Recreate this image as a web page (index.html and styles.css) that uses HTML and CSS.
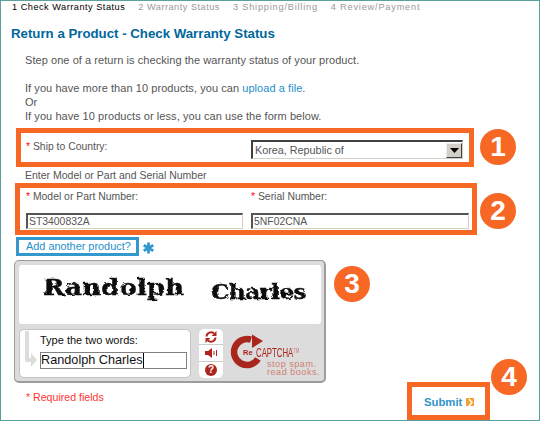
FILE: index.html
```html
<!DOCTYPE html>
<html lang="en">
<head>
<meta charset="utf-8">
<title>Return a Product</title>
<link rel="stylesheet" href="styles.css">
</head>
<body>
<div class="page">
  <nav class="steps">
    <span class="step current">1 Check Warranty Status</span>
    <span class="step">2 Warranty Status</span>
    <span class="step step-wide">3 Shipping/Billing</span>
    <span class="step step-wide">4 Review/Payment</span>
  </nav>
  <h1 class="title">Return a Product - Check Warranty Status</h1>
  <div class="intro">
    <p class="intro-first">Step one of a return is checking the warranty status of your product.</p>
    <p>If you have more than 10 products, you can <a class="link" href="#">upload a file</a>.<br>Or<br>If you have 10 products or less, you can use the form below.</p>
  </div>
  <div class="callout country-box">
    <span class="label"><span class="req">*</span> Ship to Country:</span>
    <div class="select"><span class="select-value">Korea, Republic of</span><span class="select-btn"><svg width="9" height="5" viewBox="0 0 9 5"><path d="M0 0h9L4.500 5z" fill="#000"/></svg></span></div>
  </div>
  <div class="enter-note">Enter Model or Part and Serial Number</div>
  <div class="callout numbers-box">
    <div class="field model-field">
      <span class="label"><span class="req">*</span> Model or Part Number:</span>
      <div class="input">ST3400832A</div>
    </div>
    <div class="field serial-field">
      <span class="label"><span class="req">*</span> Serial Number:</span>
      <div class="input">5NF02CNA</div>
    </div>
  </div>
  <div class="add-row">
    <a class="add-link" href="#">Add another product?</a>
    <svg class="add-star" width="11" height="12" viewBox="0 0 12 12"><g stroke="#3399cc" stroke-width="3"><path d="M6 0v12M.8 3l10.400 6M.8 9l10.400-6"/></g></svg>
  </div>
  <div class="captcha">
    <svg class="filter-defs" width="0" height="0"><filter id="warp" x="-5%" y="-15%" width="110%" height="130%"><feTurbulence type="fractalNoise" baseFrequency="0.22" numOctaves="2" seed="4"/><feDisplacementMap in="SourceGraphic" scale="3"/><feGaussianBlur stdDeviation="0.35"/></filter></svg>
    <div class="captcha-image"><span class="word-one">Randolph</span><span class="word-two">Charles</span></div>
    <div class="captcha-bottom">
      <div class="type-box">
        <svg class="type-arrow" width="14" height="38" viewBox="0 0 14 38"><path d="M2 0h4v27h2v-5l6 7-6 7v-5H4q-2 0-2-2z" fill="#dcdcdc"/></svg>
        <div class="type-body">
          <div class="type-label">Type the two words:</div>
          <div class="type-input">Randolph Charles<span class="caret"></span></div>
        </div>
      </div>
      <div class="tools">
        <div class="tool"><svg width="12" height="12" viewBox="0 0 12 12"><path d="M1.500 5.500A4.500 4.500 0 0 1 9 2.500M10.500 6.500A4.500 4.500 0 0 1 3 9.500" fill="none" stroke="#b3261e" stroke-width="2"/><path d="M11.500 0v5h-5zM.5 12V7h5z" fill="#b3261e"/></svg></div>
        <div class="tool"><svg width="13" height="10" viewBox="0 0 13 10"><path d="M0 3h3l4-3v10L3 7H0z" fill="#b3261e"/><path d="M9 3v4M11.500 2v6" stroke="#b3261e" stroke-width="1"/></svg></div>
        <div class="tool"><span class="help">?</span></div>
      </div>
      <div class="logo">
        <svg class="logo-ring" width="36" height="40" viewBox="0 0 36 40"><path d="M21 6.600A13 13 0 1 0 28 26" fill="none" stroke="#a9261c" stroke-width="6.500"/><path d="M22 1.500L33 8 22 15z" fill="#a9261c"/></svg>
        <div class="logo-text">
          <div class="logo-name"><span class="logo-re">Re</span><span class="logo-captcha">CAPTCHA<sup class="tm">TM</sup></span></div>
          <div class="logo-tag">stop spam.<br>read books.</div>
        </div>
      </div>
    </div>
  </div>
  <div class="required">* Required fields</div>
  <div class="callout submit-box">
    <a class="submit" href="#">Submit</a><span class="submit-icon"><svg width="5" height="7" viewBox="0 0 5 7"><path d="M1 0l3 3.500L1 7" fill="none" stroke="#fff" stroke-width="1.500"/></svg></span>
  </div>
  <span class="badge badge-1">1</span>
  <span class="badge badge-2">2</span>
  <span class="badge badge-3">3</span>
  <span class="badge badge-4">4</span>
</div>
</body>
</html>
```
FILE: styles.css
```css
* { box-sizing: border-box; }
html, body { margin: 0; padding: 0; background: #fff; }
body { font-family: "Liberation Sans", Arial, sans-serif; font-size: 11px; color: #555; }
.page {
  position: relative;
  width: 540px;
  height: 421px;
  border: 1px solid #5b9f9f;
  overflow: hidden;
  padding-top: 1px;
}
.steps { display: flex; gap: 13px; padding-left: 11px; height: 13px; font-size: 9.200px; line-height: 11px; letter-spacing: .5px; color: #999; white-space: nowrap; }
.step.current { color: #000; }
.step.step-wide { letter-spacing: .8px; }
.title { margin: 11px 0 0 10px; font-size: 13.250px; line-height: 16px; font-weight: bold; color: #00679c; }
.intro { margin: 11px 0 0 24px; line-height: 14px; font-size: 11px; letter-spacing: .06px; }
.intro p { margin: 0; }
.intro .intro-first { margin-bottom: 14px; }
.link { color: #1e90cc; text-decoration: none; }
.callout { border: 5px solid #f66824; }
.label { font-size: 10.400px; line-height: 14px; }
.req { color: #f00; }
.country-box {
  margin: 5px 0 0 15px;
  width: 458px;
  height: 39px;
  padding: 7px 0 0 5px;
  display: flex;
  justify-content: space-between;
  align-items: flex-start;
}
.select {
  width: 212px;
  height: 19px;
  margin: 0 6px 0 0;
  border: 1px solid #d4d0c8;
  border-top: 2px solid #404040;
  border-left: 2px solid #404040;
  display: flex;
  align-items: center;
  justify-content: space-between;
  padding-left: 2px;
}
.select-value { line-height: 14px; font-size: 10.800px; }
.select-btn {
  width: 16px;
  height: 15px;
  background: #d4d0c8;
  border: 1px solid #404040;
  border-top-color: #eee;
  border-left-color: #eee;
  display: flex;
  align-items: center;
  justify-content: center;
}
.enter-note { margin: 1px 0 0 24px; line-height: 14px; height: 14px; font-size: 10.500px; }
.numbers-box {
  margin: 1px 0 0 14px;
  width: 462px;
  height: 52px;
  padding: 2px 0 0 6px;
  display: flex;
  gap: 8px;
}
.field { display: flex; flex-direction: column; gap: 9px; }
.model-field { width: 217px; }
.serial-field { width: 218px; }
.input {
  height: 16px;
  border: 1px solid #d4d0c8;
  border-top: 2px solid #555;
  border-left: 2px solid #555;
  font-size: 10.400px;
  line-height: 13px;
  padding-left: 1px;
}
.add-row { display: flex; align-items: center; margin: 2px 0 0 15px; gap: 4px; }
.add-link {
  width: 123px;
  height: 19px;
  border: 3px solid #3399cc;
  color: #1e90cc;
  text-decoration: none;
  line-height: 13px;
  font-size: 10.900px;
  padding-left: 7px;
  white-space: nowrap;
}
.add-star { margin-top: 3px; }
.captcha {
  margin: 4px 0 0 13px;
  width: 312px;
  height: 123px;
  border-style: solid;
  border-color: #9c9c9c;
  border-width: 1px 2px 2px 1px;
  border-radius: 5px;
  background: #dcdcdc;
  padding: 4px 0 0 4px;
}
.filter-defs { position: absolute; }
.captcha-image {
  height: 59px;
  width: 302px;
  background: #fff;
  border-radius: 3px;
  display: flex;
  color: #111;
  font-family: "DejaVu Serif", serif;
  font-weight: bold;
  line-height: 26px;
  white-space: nowrap;
}
.word-one { margin: 10px 0 0 24px; width: 168px; height: 26px; font-size: 21.500px; letter-spacing: .2px; -webkit-text-stroke: .4px #111; transform: scaleX(1.2); transform-origin: left center; filter: url(#warp); }
.word-two { margin: 15px 0 0 0; height: 26px; font-size: 19.500px; letter-spacing: -.5px; -webkit-text-stroke: .4px #111; transform: scaleX(1.19); transform-origin: left center; filter: url(#warp); }
.captcha-bottom { display: flex; margin-top: 5px; }
.type-box {
  width: 172px;
  height: 49px;
  background: #fff;
  border: 1px solid #c4c4c4;
  border-radius: 5px;
  display: flex;
  padding-left: 2px;
}
.type-arrow { margin-top: 1px; margin-left: 1px; }
.type-body { margin-left: 3px; width: 148px; }
.type-label { color: #111; line-height: 14px; margin-top: 3px; font-size: 11px; }
.type-input {
  margin-top: 5px;
  width: 147px;
  height: 17px;
  border: 1px solid #808080;
  font-size: 12.700px;
  line-height: 15px;
  color: #111;
  white-space: nowrap;
}
.caret { display: inline-block; width: 1px; height: 15px; background: #000; vertical-align: top; }
.tools {
  margin-left: 8px;
  width: 24px;
  height: 49px;
  background: #fff;
  border-radius: 5px;
  display: flex;
  flex-direction: column;
}
.tool { height: 16.300px; display: flex; align-items: center; justify-content: center; border-bottom: 1px solid #ccc; }
.tool:last-child { border-bottom: 0; }
.help {
  width: 12px;
  height: 12px;
  background: #a9261c;
  color: #fff;
  border-radius: 50%;
  font-size: 10px;
  font-weight: bold;
  line-height: 12px;
  text-align: center;
}
.logo { display: flex; margin-left: 7px; }
.logo-ring { margin-top: 4px; flex: none; }
.logo-text { margin-left: -23px; position: relative; }
.logo-name { color: #a9261c; margin-top: 18px; height: 12px; line-height: 12px; white-space: nowrap; display: flex; align-items: center; }
.logo-re { font-size: 7.500px; font-weight: bold; width: 13px; }
.logo-captcha { font-size: 13px; display: inline-block; transform: scaleX(.6); transform-origin: left center; width: 45px; }
.tm { font-size: 7px; vertical-align: top; color: #c77; line-height: 8px; }
.logo-tag { color: #d08070; font-size: 9px; line-height: 8px; letter-spacing: .55px; margin-left: 24px; margin-top: 1px; white-space: nowrap; }
.required { position: absolute; left: 25px; top: 389px; color: #f33; line-height: 14px; font-size: 10.600px; }
.submit-box {
  position: absolute;
  left: 406px;
  top: 381px;
  width: 83px;
  height: 38px;
  display: flex;
  align-items: center;
  padding: 2px 0 0 12px;
  gap: 4px;
}
.submit { color: #2f95c9; font-weight: bold; font-size: 11.300px; text-decoration: none; }
.submit-icon { width: 8px; height: 8px; background: #f4a033; display: flex; align-items: center; justify-content: center; }
.badge {
  position: absolute;
  width: 36px;
  height: 36px;
  border-radius: 50%;
  background: #f66824;
  color: #fff;
  font-size: 28px;
  font-weight: bold;
  line-height: 36px;
  text-align: center;
}
.badge-1 { left: 479px; top: 128px; }
.badge-2 { left: 479px; top: 192px; }
.badge-3 { left: 333px; top: 265px; }
.badge-4 { left: 490px; top: 358px; }
```
